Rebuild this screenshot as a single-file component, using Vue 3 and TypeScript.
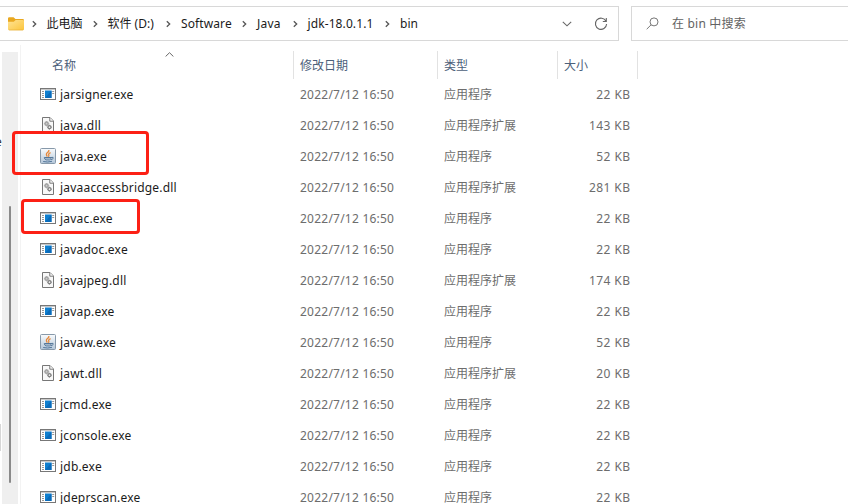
<script setup lang="ts">
type Kind = 'app' | 'dll' | 'java'
interface FileRow {
  name: string
  kind: Kind
  size: string
}

const crumbs: string[] = ['此电脑', '软件 (D:)', 'Software', 'Java', 'jdk-18.0.1.1', 'bin']

const files: FileRow[] = [
  { name: 'jarsigner.exe', kind: 'app', size: '22 KB' },
  { name: 'java.dll', kind: 'dll', size: '143 KB' },
  { name: 'java.exe', kind: 'java', size: '52 KB' },
  { name: 'javaaccessbridge.dll', kind: 'dll', size: '281 KB' },
  { name: 'javac.exe', kind: 'app', size: '22 KB' },
  { name: 'javadoc.exe', kind: 'app', size: '22 KB' },
  { name: 'javajpeg.dll', kind: 'dll', size: '174 KB' },
  { name: 'javap.exe', kind: 'app', size: '22 KB' },
  { name: 'javaw.exe', kind: 'java', size: '52 KB' },
  { name: 'jawt.dll', kind: 'dll', size: '20 KB' },
  { name: 'jcmd.exe', kind: 'app', size: '22 KB' },
  { name: 'jconsole.exe', kind: 'app', size: '22 KB' },
  { name: 'jdb.exe', kind: 'app', size: '22 KB' },
  { name: 'jdeprscan.exe', kind: 'app', size: '22 KB' },
]
</script>

<template>
  <div class="explorer">
    <header class="toolbar">
      <nav class="address">
        <svg class="folder" width="16" height="14" viewBox="0 0 16 14">
          <defs>
            <linearGradient id="fold" x1="0" y1="0" x2="1" y2="1">
              <stop offset="0" stop-color="#ffe394" />
              <stop offset="1" stop-color="#fbc53c" />
            </linearGradient>
          </defs>
          <path d="M0 1.5Q0 .3 1.2.3H5.5L7.5 2H14.8Q16 2 16 3.2V8H0Z" fill="#e9a820" />
          <path d="M0 4.7H5.8L7.7 3H15Q16 3 16 4V12Q16 13.2 14.8 13.2H1.2Q0 13.2 0 12Z" fill="url(#fold)" />
          <path d="M.5 12.8Q.8 13.2 1.2 13.2H14.8Q15.3 13.2 15.6 12.8Z" fill="#dfa32e" />
        </svg>
        <template v-for="(crumb, i) in crumbs" :key="crumb">
          <svg class="chevron" width="5" height="8" viewBox="0 0 5 8">
            <path d="M.8 1.2 3.7 4 .8 6.8" />
          </svg>
          <span class="crumb" :class="'crumb-' + i">{{ crumb }}</span>
        </template>
        <span class="spacer"></span>
        <svg class="line-icon" width="10" height="6" viewBox="0 0 10 6"><path d="M.8.8 5 4.8 9.2.8" /></svg>
        <svg class="line-icon refresh" width="14" height="14" viewBox="0 0 14 14">
          <path d="M12 4.2A5.6 5.6 0 1 0 12.6 7M12.3 1V4.5H8.8" />
        </svg>
      </nav>
      <div class="search">
        <svg class="lens" width="13" height="13" viewBox="0 0 13 13">
          <circle cx="8" cy="4.9" r="4" />
          <path d="M5.1 7.8.7 12.2" />
        </svg>
        <span class="hint">在 bin 中搜索</span>
      </div>
    </header>

    <div class="body">
      <aside class="gutter">
        <span class="edge-text">e</span>
        <span class="edge-block"></span>
        <div class="track"><div class="thumb"></div></div>
      </aside>
      <main class="listing">
        <div class="head">
          <span class="cell name">名称
            <svg class="sort" width="9" height="5" viewBox="0 0 9 5"><path d="M.6 4.5 4.5.7 8.4 4.5" /></svg>
          </span>
          <span class="cell date">修改日期</span>
          <span class="cell kind">类型</span>
          <span class="cell size">大小</span>
        </div>
        <div v-for="file in files" :key="file.name" class="row">
          <span class="name">
            <svg v-if="file.kind === 'app'" class="icon" width="16" height="16" viewBox="0 0 16 16">
              <rect x=".5" y="2.5" width="15" height="11" fill="#fff" stroke="#777" />
              <path d="M0 2.7H16" stroke="#777" stroke-width="1.4" />
              <rect x="5" y="4.5" width="6.5" height="7.5" fill="#0f7fcf" />
              <path d="M5 12 11.5 4.5V12Z" fill="#0a6bba" />
              <path d="M2 5.5H4M2 7.5H4M2 9.5H4M2 11.5H4M12.2 5.5H14.2M12.2 7.5H14.2" stroke="#8b8b8b" stroke-width=".9" />
            </svg>
            <svg v-else-if="file.kind === 'dll'" class="icon" width="16" height="16" viewBox="0 0 16 16">
              <path d="M2.5.5H10L13.5 4V15.5H2.5Z" fill="#f8f8f8" stroke="#777" />
              <path d="M9.8.7V4.2H13.3" fill="#fff" stroke="#777" />
              <circle cx="6.6" cy="6.7" r="1.6" fill="#ccc" stroke="#a2a2a2" stroke-width="1.5" />
              <path d="M6.6 4V5M6.6 8.4V9.4M3.9 6.7H4.9M8.3 6.7H9.3" stroke="#aaa" />
              <circle cx="9.5" cy="10.2" r="1.5" fill="#eee" stroke="#808080" stroke-width="1.3" />
              <path d="M9.5 7.8V8.6M9.5 11.8V12.6M7.1 10.2H7.9M11.1 10.2H11.9" stroke="#888" />
            </svg>
            <svg v-else class="icon" width="16" height="16" viewBox="0 0 16 16">
              <defs>
                <linearGradient id="tile" x1="0" y1="0" x2="0" y2="1">
                  <stop offset="0" stop-color="#fafcfd" />
                  <stop offset="1" stop-color="#b3c6d9" />
                </linearGradient>
              </defs>
              <rect x=".5" y=".5" width="15" height="15" rx="1" fill="url(#tile)" stroke="#8799aa" />
              <path d="M8.9 2Q9.2 3.6 7.2 4.8Q5.5 6.2 7.4 8.5M10.6 4.7Q7.9 5.8 8.8 7Q9.2 7.8 8.3 8.8" fill="none" stroke="#e78a3c" stroke-width="1.3" />
              <path d="M4.3 9.5H11Q10.8 11.7 9.5 11.9H6Q4.6 11.6 4.3 9.5M11 9.5Q13.9 8.8 13.2 10.4Q12.4 11.6 10.5 11.6M3.2 13.5Q7.7 14.6 12 13.3" fill="none" stroke="#54779a" stroke-width="1" />
              <path d="M5 10.6H10.5" stroke="#9eb2c5" />
            </svg>
            <span class="filename">{{ file.name }}</span>
          </span>
          <span class="date">2022/7/12 16:50</span>
          <span class="kind">{{ file.kind === 'dll' ? '应用程序扩展' : '应用程序' }}</span>
          <span class="size">{{ file.size }}</span>
        </div>
      </main>
    </div>
    <div class="mark mark-java"></div>
    <div class="mark mark-javac"></div>
  </div>
</template>

<style>
body {
  margin: 0;
  background: #fff;
  overflow: hidden;
}
</style>

<style scoped>
.explorer {
  position: relative;
  width: 848px;
  height: 504px;
  overflow: hidden;
  background: #fff;
  color: #1b1b1b;
  font: 12px/16px "Noto Sans", "Noto Sans CJK SC", sans-serif;
  white-space: nowrap;
}
svg { flex: none; display: block; }
.toolbar {
  display: flex;
  gap: 12px;
  height: 45px;
  padding-top: 6px;
  box-sizing: border-box;
}
.address, .search {
  display: flex;
  align-items: center;
  height: 35px;
  box-sizing: border-box;
  border: 1px solid #d8d8d8;
}
.address {
  width: 619px;
  border-left: 0;
  padding: 0 10px 0 8px;
}
.search {
  flex: 1;
  border-right: 0;
  padding-left: 14px;
  color: #626262;
}
.hint { letter-spacing: 0.2px; }
.chevron { margin: 1px 10px 0 8px; }
.chevron path { fill: none; stroke: #555; stroke-width: 1.3; }
.folder + .chevron { margin-right: 9.5px; }
.crumb { flex: none; margin-right: 2px; }
.crumb-0 { width: 36px; }
.crumb-1 { width: 48.5px; }
.crumb-2 { width: 51px; letter-spacing: 0.1px; }
.crumb-3 { width: 25.5px; letter-spacing: 0.2px; }
.crumb-4 { width: 67.5px; letter-spacing: 0.1px; }
.spacer { flex: 1; }
.line-icon path { fill: none; stroke: #666; stroke-width: 1.1; }
.refresh { margin-left: 22px; }
.lens { margin-right: 13px; }
.lens circle, .lens path { fill: none; stroke: #777; stroke-width: 1; }
.body { display: flex; height: 459px; }
.gutter {
  position: relative;
  width: 20px;
  box-sizing: border-box;
  padding: 7px 2px 0;
}
.track {
  height: 452px;
  box-sizing: border-box;
  padding: 154px 7px 0;
  background: #efefef;
}
.thumb { width: 2px; height: 277px; border-radius: 1px; background: #8a8a8a; }
.edge-text {
  position: absolute;
  left: -5px;
  top: 89px;
  color: #333;
}
.edge-block {
  position: absolute;
  left: 0;
  top: 379px;
  width: 1px;
  height: 27px;
  background: #d6d6d6;
}
.listing { flex: 1; border-left: 1px solid #f3f3f3; }
.head {
  display: flex;
  height: 28px;
  margin: 6px 0 0;
  color: #4c607a;
}
.head .cell {
  position: relative;
  box-sizing: border-box;
  border-right: 1px solid #e2e2e2;
  padding-top: 7px;
}
.name { width: 273px; box-sizing: border-box; }
.date { width: 144px; padding-left: 6px; box-sizing: border-box; }
.kind { width: 120px; padding-left: 6px; box-sizing: border-box; }
.size { width: 80px; padding-left: 6px; box-sizing: border-box; }
.head .name { padding-left: 31px; }
.sort { position: absolute; left: 144px; top: 1px; }
.sort path { fill: none; stroke: #666; stroke-width: 1; }
.row {
  display: flex;
  align-items: center;
  height: 31px;
  color: #6d6d6d;
}
.row .name {
  display: flex;
  align-items: center;
  gap: 4px;
  padding-left: 19px;
  color: #1b1b1b;
}
.icon { margin-bottom: 1px; }
.filename { letter-spacing: 0.2px; }
.row .date { letter-spacing: 0.23px; }
.row .size { padding-right: 7.6px; text-align: right; letter-spacing: 0.4px; }
.mark {
  position: absolute;
  box-sizing: border-box;
  border: 3px solid #fc2015;
  border-radius: 4px;
}
.mark-java { left: 12px; top: 131px; width: 137px; height: 44px; }
.mark-javac { left: 21px; top: 199px; width: 119px; height: 35px; }
</style>
